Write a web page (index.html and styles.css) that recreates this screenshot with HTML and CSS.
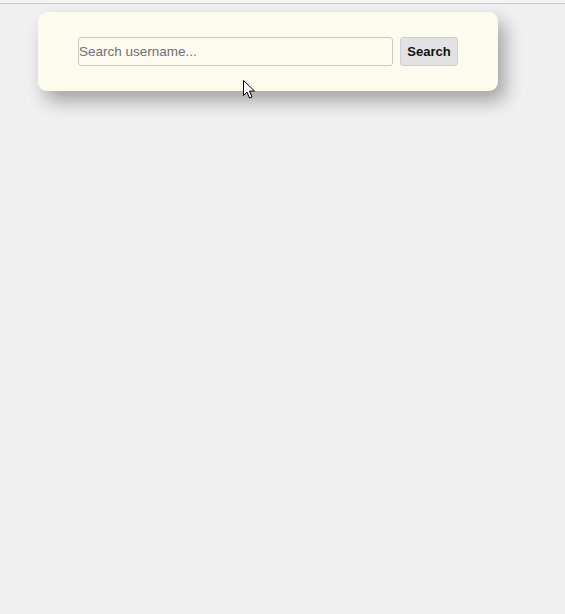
FILE: index.html
```html
<!DOCTYPE html>
<html lang="en">
<head>
<meta charset="utf-8">
<title>Search</title>
<link rel="stylesheet" href="styles.css">
</head>
<body>
<div class="topline"></div>
<main class="page">
  <section class="card">
    <form class="search">
      <input class="search-input" type="text" placeholder="Search username...">
      <button class="search-btn" type="button">Search</button>
    </form>
  </section>
</main>
<svg class="cursor" width="13" height="20" viewBox="0 0 13 20" aria-hidden="true">
  <path d="M0.5 0.5 L0.5 15.5 L4 12 L6.5 18 L9 17 L6.5 11 L11.5 11 Z" fill="#fff" stroke="#000" stroke-width="1" stroke-linejoin="miter"/>
</svg>
</body>
</html>
```
FILE: styles.css
```css
html, body {
  margin: 0;
  padding: 0;
}
body {
  background: #f0f0f0;
  min-height: 614px;
  font-family: "Liberation Sans", Arial, sans-serif;
  position: relative;
}
.topline {
  height: 3px;
  background: #f4f4f4;
  border-bottom: 1px solid #c9c9c9;
}
.page {
  padding: 8px 0 0 38px;
}
.card {
  width: 380px;
  padding: 25px 40px;
  background: #fdfaee;
  border-radius: 9px;
  box-shadow: 7px 10px 18px rgba(0, 0, 0, 0.32);
}
.search {
  display: flex;
  gap: 7px;
  margin: 0;
}
.search-input {
  width: 315px;
  height: 29px;
  box-sizing: border-box;
  border: 1px solid #c8c8c8;
  border-radius: 3px;
  background: #fdfaee;
  padding: 0;
  font-family: "Liberation Sans", Arial, sans-serif;
  font-size: 13.5px;
  color: #333;
}
.search-input::placeholder {
  color: #6e7078;
}
.search-btn {
  width: 58px;
  height: 29px;
  box-sizing: border-box;
  border: 1px solid #cfcfcf;
  border-radius: 3px;
  background: #e2e2e2;
  font-family: "Liberation Sans", Arial, sans-serif;
  font-size: 13px;
  font-weight: bold;
  color: #111;
  padding: 0;
}
.cursor {
  position: absolute;
  left: 243px;
  top: 80px;
}
```
